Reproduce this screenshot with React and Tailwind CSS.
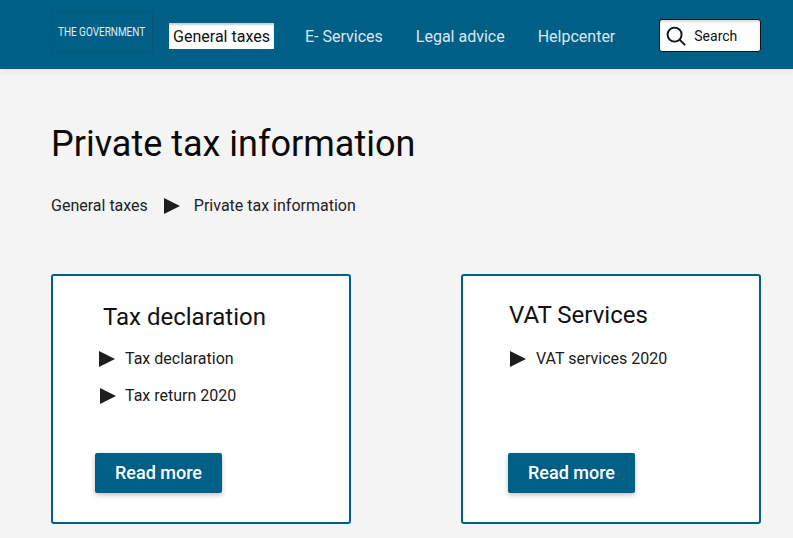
const Tri = ({ className = "" }) => (
  <svg width="16" height="16" viewBox="0 0 16 16" className={`shrink-0 ${className}`}>
    <path d="M0 0 L16 8 L0 16 Z" fill="#1e1e1e" />
  </svg>
);

const Item = ({ children, className = "" }) => (
  <li className={`flex items-center h-[22px] text-[16px] leading-[22px] text-[#1a1a1a] ${className}`}>
    {children}
  </li>
);

const Button = ({ className = "" }) => (
  <button className={`flex items-center justify-center w-[127px] h-[40px] pb-[1px] rounded-[2px] bg-[#005f87] text-white text-[18px] font-medium shadow-[0_2px_5px_rgba(0,0,0,0.25)] ${className}`}>
    Read more
  </button>
);

export default function App() {
  return (
    <div className="w-[793px] h-[538px] overflow-hidden bg-[#f4f4f4] font-['Roboto',sans-serif]">
      <header className="relative flex items-start h-[69px] pl-[51px] bg-[#005f87] shadow-[0_2px_6px_rgba(0,0,0,0.08)]">
        <div className="flex items-center justify-center w-[102px] h-[40px] mt-[12px] border border-[#0b5373]">
          <span className="block whitespace-nowrap text-[12px] leading-[14px] text-[#e2eef3] scale-x-[0.83]">THE GOVERNMENT</span>
        </div>
        <nav className="flex items-start text-[16px] text-[#d9e8ef]">
          <a className="flex items-center justify-center w-[105px] h-[26px] ml-[16px] mt-[23px] pt-[2px] bg-white text-[#111] shadow-[inset_0_2px_2px_rgba(0,0,0,0.2)]">General taxes</a>
          <a className="ml-[31px] mt-[27px] leading-[19px]">E- Services</a>
          <a className="ml-[33px] mt-[27px] leading-[19px]">Legal advice</a>
          <a className="ml-[33px] mt-[27px] leading-[19px]">Helpcenter</a>
        </nav>
        <div className="flex items-center w-[102px] h-[33px] ml-[44px] mt-[19px] pl-[6px] bg-white border border-[#111] rounded-[3px] shadow-[inset_0_2px_3px_rgba(0,0,0,0.15)]">
          <svg width="20" height="20" viewBox="0 0 20 20" fill="none" stroke="#111" strokeWidth="1.9">
            <circle cx="8.6" cy="8.6" r="7" />
            <path d="M13.8 13.8 L18.6 18.6" strokeLinecap="round" />
          </svg>
          <span className="ml-[8px] pt-[2px] text-[14px] text-[#111]">Search</span>
        </div>
      </header>

      <main className="pl-[51px] pr-[32px]">
        <h1 className="mt-[53px] text-[36px] leading-[44px] font-normal text-[#0b0b0b]">Private tax information</h1>
        <div className="flex items-center h-[20px] mt-[30px] text-[16px] text-[#222]">
          <span>General taxes</span>
          <Tri className="ml-[16px]" />
          <span className="ml-[14px]">Private tax information</span>
        </div>

        <div className="flex justify-between mt-[58px]">
          <section className="w-[300px] h-[250px] bg-white border-2 border-[#005f87] rounded-[3px] pt-[26px] pl-[42px]">
            <h2 className="ml-[8px] text-[24px] leading-[30px] font-normal text-[#111]">Tax declaration</h2>
            <ul className="mt-[16px] ml-[4px]">
              <Item><Tri /><span className="ml-[10px]">Tax declaration</span></Item>
              <Item className="mt-[15px]"><Tri className="ml-[1px]" /><span className="ml-[9px]">Tax return 2020</span></Item>
            </ul>
            <Button className="mt-[46px]" />
          </section>
          <section className="w-[300px] h-[250px] bg-white border-2 border-[#005f87] rounded-[3px] pt-[24px] pl-[45px]">
            <h2 className="ml-[1px] text-[24px] leading-[30px] font-normal text-[#111]">VAT Services</h2>
            <ul className="mt-[18px] ml-[2px]">
              <Item><Tri /><span className="ml-[10px]">VAT services 2020</span></Item>
            </ul>
            <Button className="mt-[83px]" />
          </section>
        </div>
      </main>
    </div>
  );
}
